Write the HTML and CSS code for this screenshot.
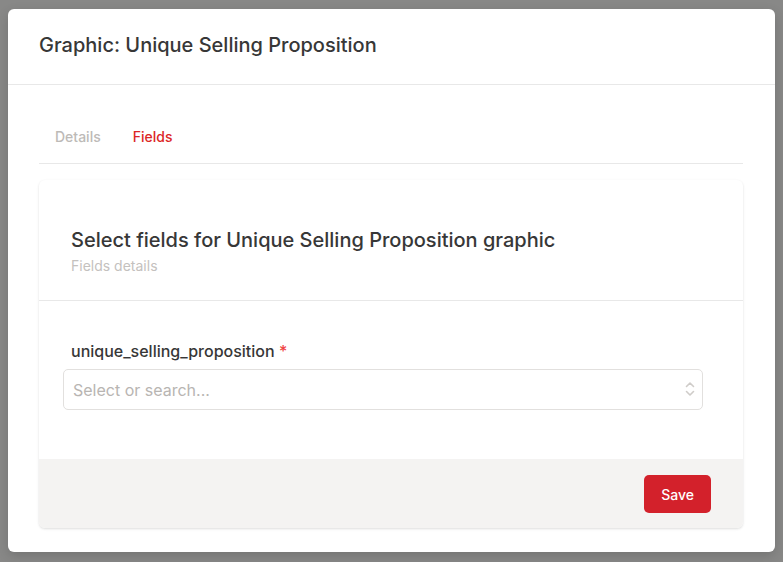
FILE: index.html
```html
<!DOCTYPE html>
<html lang="en">
<head>
    <meta charset="UTF-8">
    <meta name="viewport" content="width=device-width, initial-scale=1.0">
    <title>Graphic: Unique Selling Proposition</title>
    <link rel="stylesheet" href="styles.css">
</head>
<body>
    <div class="modal">
        <div class="modal-header">
            <h2 class="modal-title">Graphic: Unique Selling Proposition</h2>
        </div>

        <div class="modal-body">
            <div class="tabs">
                <button class="tab">Details</button>
                <button class="tab active">Fields</button>
            </div>

            <div class="card">
                <div class="card-header">
                    <h3 class="card-title">Select fields for Unique Selling Proposition graphic</h3>
                    <p class="card-subtitle">Fields details</p>
                </div>

                <div class="card-body">
                    <label class="field-label" for="usp">unique_selling_proposition <span class="required">*</span></label>
                    <div class="select">
                        <input type="text" id="usp" placeholder="Select or search...">
                        <svg class="select-icon" width="12" height="18" viewBox="0 0 12 18" fill="none" stroke="currentColor" stroke-width="1.6" stroke-linecap="round" stroke-linejoin="round">
                            <path d="M2.5 6.5 6 3l3.5 3.5"/>
                            <path d="M2.5 11.5 6 15l3.5-3.5"/>
                        </svg>
                    </div>
                </div>

                <div class="card-footer">
                    <button type="submit" class="btn-save">Save</button>
                </div>
            </div>
        </div>
    </div>
</body>
</html>
```

FILE: styles.css
```css
* {
    margin: 0;
    padding: 0;
    box-sizing: border-box;
    font-family: Inter, "Noto Sans", Arial, sans-serif;
}

body {
    min-height: 100vh;
    background-color: #888887;
    padding: 9px 8px 10px;
}

.modal {
    background: white;
    border-radius: 6px;
    box-shadow: 0 4px 12px rgba(0, 0, 0, 0.15);
    height: 543px;
    display: flex;
    flex-direction: column;
}

.modal-header {
    padding: 22px 31px 25px;
    border-bottom: 1px solid #e8e8e8;
}

.modal-title {
    font-size: 20px;
    line-height: 28px;
    font-weight: 500;
    color: #373737;
}

.modal-body {
    padding: 26px 32px 24px 31px;
}

.tabs {
    display: flex;
    border-bottom: 1px solid #e8e8e8;
    margin-bottom: 16px;
}

.tab {
    background: none;
    border: none;
    padding: 16px;
    font-size: 14px;
    line-height: 20px;
    font-weight: 500;
    color: #bdbab7;
    cursor: pointer;
}

.tab.active {
    color: #dc2626;
}

.card {
    background: white;
    border-radius: 6px;
    box-shadow: 0 1px 3px rgba(0, 0, 0, 0.1), 0 1px 2px rgba(0, 0, 0, 0.04);
    overflow: hidden;
}

.card-header {
    padding: 46px 32px 24px;
    border-bottom: 1px solid #e8e8e8;
}

.card-title {
    font-size: 20px;
    line-height: 28px;
    font-weight: 500;
    color: #373737;
    margin-bottom: 2px;
}

.card-subtitle {
    font-size: 14px;
    line-height: 20px;
    color: #c4c1be;
}

.card-body {
    padding: 40px 40px 49px 24px;
}

.field-label {
    display: block;
    padding-left: 8px;
    margin-bottom: 8px;
    font-size: 16px;
    line-height: 20px;
    font-weight: 500;
    color: #373737;
}

.required {
    color: #ef4444;
}

.select {
    position: relative;
}

.select input {
    width: 100%;
    height: 41px;
    padding: 0 32px 0 9px;
    border: 1px solid #e2e0de;
    border-radius: 5px;
    font-size: 16px;
    color: #373737;
}

.select input::placeholder {
    color: #b8b5b2;
}

.select input:focus {
    outline: none;
    border-color: #dc2626;
}

.select-icon {
    position: absolute;
    right: 7px;
    top: 11px;
    color: #cfccc9;
}

.card-footer {
    background-color: #f4f3f2;
    padding: 16px 32px 15px;
    display: flex;
    justify-content: flex-end;
}

.btn-save {
    background-color: #d3212b;
    color: white;
    border: none;
    border-radius: 5px;
    height: 38px;
    padding: 0 17px;
    font-size: 14px;
    font-weight: 500;
    cursor: pointer;
}

.btn-save:hover {
    background-color: #b91c1c;
}
```
